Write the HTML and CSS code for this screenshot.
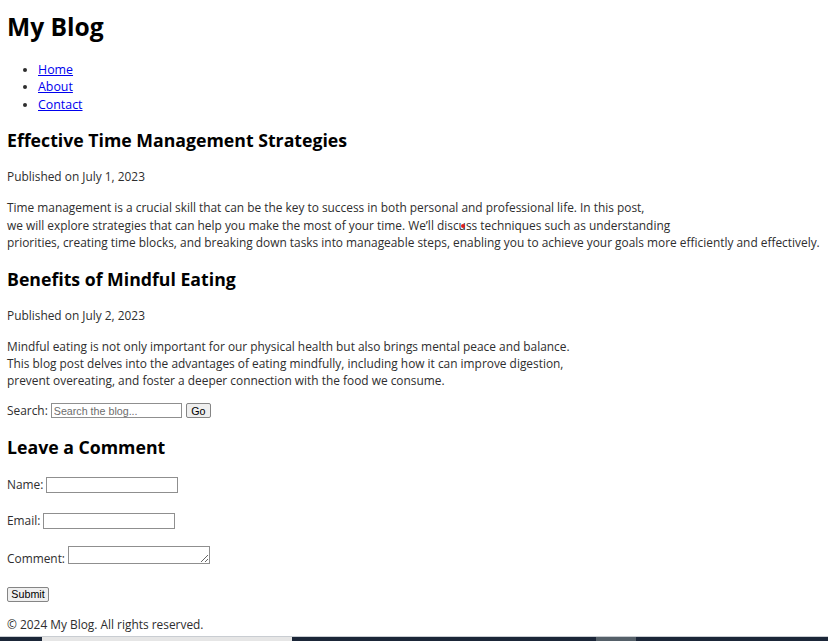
FILE: index.html
```html
<!DOCTYPE html>
<html lang="en">
<head>
<meta charset="utf-8">
<title>My Blog</title>
<link rel="stylesheet" href="styles.css">
</head>
<body>
<header class="site-header">
  <h1 class="site-title">My Blog</h1>
  <nav>
    <ul class="nav-list">
      <li><a href="#">Home</a></li>
      <li><a href="#">About</a></li>
      <li><a href="#">Contact</a></li>
    </ul>
  </nav>
</header>
<main>
  <article class="post">
    <h2 class="post-title first">Effective Time Management Strategies</h2>
    <p class="post-date">Published on July 1, 2023</p>
    <p class="post-body">Time management is a crucial skill that can be the key to success in both personal and professional life. In this post,<br>we will explore strategies that can help you make the most of your time. We’ll disc<span class="mark">u<span class="dot"></span></span>ss techniques such as understanding<br>priorities, creating time blocks, and breaking down tasks into manageable steps, enabling you to achieve your goals more efficiently and effectively.</p>
  </article>
  <article class="post">
    <h2 class="post-title">Benefits of Mindful Eating</h2>
    <p class="post-date">Published on July 2, 2023</p>
    <p class="post-body">Mindful eating is not only important for our physical health but also brings mental peace and balance.<br>This blog post delves into the advantages of eating mindfully, including how it can improve digestion,<br>prevent overeating, and foster a deeper connection with the food we consume.</p>
  </article>
  <form class="search-row">
    <label class="lbl" for="q">Search:</label>
    <input class="search-input" id="q" type="text" placeholder="Search the blog...">
    <button class="btn go" type="button">Go</button>
  </form>
  <section class="comments">
    <h2 class="post-title">Leave a Comment</h2>
    <div class="field name-field">
      <label class="lbl" for="n">Name:</label>
      <input class="text-input" id="n" type="text">
    </div>
    <div class="field email-field">
      <label class="lbl" for="e">Email:</label>
      <input class="text-input" id="e" type="email">
    </div>
    <div class="field comment-field">
      <label class="lbl" for="c">Comment:</label>
      <textarea class="comment-box" id="c"></textarea>
    </div>
    <div class="submit-row">
      <button class="btn submit" type="button">Submit</button>
    </div>
  </section>
</main>
<footer class="site-footer">© 2024 My Blog. All rights reserved.</footer>
<div class="taskbar">
  <span class="tb-seg tb-dark1"></span>
  <span class="tb-seg tb-light"></span>
  <span class="tb-seg tb-dark2"></span>
  <span class="tb-seg tb-grey"></span>
  <span class="tb-seg tb-dark3"></span>
</div>
</body>
</html>
```

FILE: styles.css
```css
html, body {
  margin: 0;
  padding: 0;
  background: #fff;
}
body {
  padding: 0 7px;
  font-family: "Open Sans", "Noto Sans", sans-serif;
  font-size: 11.9px;
  line-height: 17.3px;
  color: #2e2e2e;
  overflow: hidden;
  height: 641px;
  box-sizing: border-box;
}
.site-title {
  margin: 0;
  padding-top: 10px;
  font-size: 24.6px;
  line-height: 34px;
  font-weight: 700;
  color: #000;
}
.nav-list {
  margin: 17px 0 0;
  padding-left: 31px;
  list-style: disc;
  font-size: 12.4px;
}
.nav-list a {
  color: #0000ee;
}
.post-title {
  margin: 15.5px 0 0;
  font-size: 17.7px;
  line-height: 25.6px;
  font-weight: 700;
  color: #000;
}
.post-date {
  margin: 14.5px 0 0;
}
.post-body {
  margin: 13.5px 0 0;
  white-space: nowrap;
}
.mark {
  position: relative;
}
.dot {
  position: absolute;
  left: 2px;
  top: 7px;
  width: 4px;
  height: 4px;
  border-radius: 50%;
  background: #e0201a;
}
.search-row {
  margin: 12.5px 0 0;
  display: flex;
  align-items: center;
  height: 17.3px;
}
.lbl {
  margin-right: 3px;
}
.search-input {
  width: 131px;
  height: 15px;
  box-sizing: border-box;
  border: 1px solid #8f8f8f;
  padding: 0 2px;
  font-family: "Liberation Sans", Arial, sans-serif;
  font-size: 10.7px;
  margin: 0 4px 0 0;
}
.search-input::placeholder {
  color: #6d6d6d;
}
.btn {
  height: 15px;
  box-sizing: border-box;
  padding: 0 5px;
  font-family: "Liberation Sans", Arial, sans-serif;
  font-size: 10.7px;
  line-height: 12px;
  background: #efefef;
  border: 1px solid #858585;
  border-radius: 2px;
  color: #000;
}
.go {
  width: 25px;
  padding: 0;
}
.comments .post-title {
  margin-top: 15.5px;
}
.field {
  display: flex;
  align-items: center;
  height: 17.3px;
}
.name-field {
  margin-top: 16px;
}
.email-field {
  margin-top: 18.7px;
}
.comment-field {
  margin-top: 16.3px;
  height: 21.7px;
  align-items: flex-end;
}
.text-input {
  width: 132px;
  height: 16px;
  box-sizing: border-box;
  border: 1px solid #8f8f8f;
  margin: 0;
}
.comment-box {
  width: 142px;
  height: 18px;
  box-sizing: border-box;
  border: 1px solid #8f8f8f;
  margin: 0 0 3.7px;
  padding: 0;
  resize: both;
}
.submit-row {
  margin-top: 17.5px;
  height: 15px;
}
.submit {
  width: 42px;
  padding: 0;
}
.site-footer {
  margin-top: 16px;
}
.taskbar {
  position: fixed;
  left: 0;
  right: 0;
  bottom: 0;
  height: 4px;
  display: flex;
  border-top: 1px solid #c9cdd2;
}
.tb-seg {
  display: block;
  height: 100%;
}
.tb-dark1 { width: 42px; background: #1b2638; }
.tb-light { width: 250px; background: #e6e6e6; }
.tb-dark2 { width: 304px; background: #1b2638; }
.tb-grey { width: 40px; background: #556069; }
.tb-dark3 { flex: 1; background: #1b2638; }
```
